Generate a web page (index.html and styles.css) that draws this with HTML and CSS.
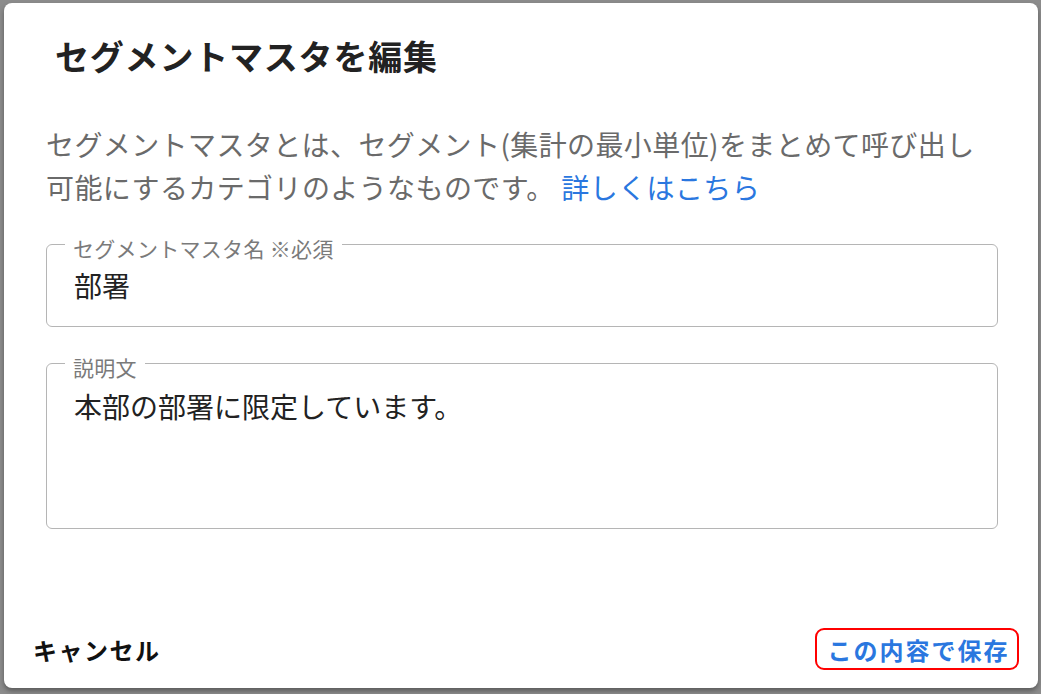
FILE: index.html
```html
<!DOCTYPE html>
<html lang="ja">
<head>
<meta charset="utf-8">
<title>セグメントマスタを編集</title>
<link rel="stylesheet" href="styles.css">
</head>
<body>
<div class="dialog">
  <h2 class="title">セグメントマスタを編集</h2>
  <p class="desc">セグメントマスタとは、セグメント(集計の最小単位)をまとめて呼び出し<br>可能にするカテゴリのようなものです。 <a class="link" href="#">詳しくはこちら</a></p>
  <fieldset class="field">
    <legend class="label">セグメントマスタ名 ※必須</legend>
    <div class="value">部署</div>
  </fieldset>
  <fieldset class="field field-multi">
    <legend class="label">説明文</legend>
    <div class="value value-multi">本部の部署に限定しています。</div>
  </fieldset>
  <div class="actions">
    <button class="btn btn-cancel" type="button">キャンセル</button>
    <button class="btn btn-save" type="button">この内容で保存</button>
  </div>
</div>
</body>
</html>
```

FILE: styles.css
```css
html, body {
  margin: 0;
  height: 100%;
}
body {
  box-sizing: border-box;
  height: 694px;
  padding: 3px 3px 6px 4px;
  background: #8c8c8c;
  font-family: "Noto Sans CJK JP", "Noto Sans", sans-serif;
  overflow: hidden;
}
.dialog {
  box-sizing: border-box;
  height: 100%;
  background: #ffffff;
  border-radius: 8px;
  box-shadow: 0 3px 5px rgba(0, 0, 0, 0.35);
  display: flex;
  flex-direction: column;
}
.title {
  margin: 0;
  padding: 31px 0 0 51px;
  font-size: 34px;
  line-height: 44px;
  font-weight: 700;
  color: #222222;
  letter-spacing: 0.8px;
}
.desc {
  margin: 45px 40px 0 42px;
  font-size: 28px;
  line-height: 43px;
  letter-spacing: 0.4px;
  color: #6a6a6a;
}
.link {
  color: #2a77df;
  text-decoration: none;
}
.field {
  margin: 21px 40px 0 42px;
  padding: 0 27px;
  border: 1px solid #b5b5b5;
  border-radius: 6px;
  min-width: 0;
}
.field-multi {
  margin-top: 22px;
}
.label {
  margin-left: -9px;
  padding: 8px 8px 0;
  font-size: 21px;
  line-height: 21px;
  letter-spacing: 0.3px;
  color: #7a7a7a;
}
.value {
  margin: 8px 0 23px;
  font-size: 28px;
  line-height: 36px;
  color: #222222;
}
.value-multi {
  margin: 10px 0 0;
  min-height: 140px;
}
.actions {
  margin-top: auto;
  padding: 0 19px 18px 29px;
  display: flex;
  align-items: center;
  justify-content: space-between;
}
.btn {
  font-family: inherit;
  font-size: 24px;
  font-weight: 700;
  letter-spacing: 1.5px;
  background: none;
  border: none;
  padding: 0;
  cursor: pointer;
}
.btn-cancel {
  color: #111111;
  padding: 0;
}
.btn-save {
  box-sizing: border-box;
  width: 204px;
  height: 42px;
  border: 2px solid #ff0000;
  border-radius: 9px;
  color: #2a77df;
  letter-spacing: 2px;
  padding: 0 0 0 3px;
}
```
